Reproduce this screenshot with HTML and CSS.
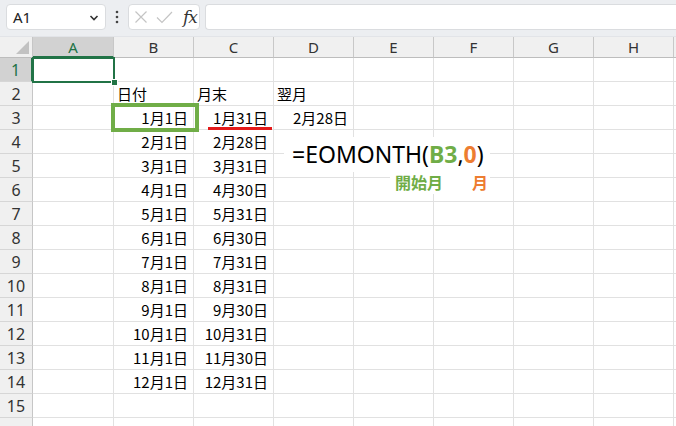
FILE: index.html
```html
<!DOCTYPE html>
<html lang="ja">
<head>
<meta charset="utf-8">
<link rel="stylesheet" href="styles.css">
</head>
<body>
<div class="toolbar">
  <div class="namebox">
    <span class="name">A1</span>
    <svg class="chev" width="10" height="8" viewBox="0 0 10 8"><path d="M1.5 2 L5 5.5 L8.5 2" fill="none" stroke="#333" stroke-width="1.6"/></svg>
  </div>
  <div class="dots">
    <svg width="4" height="14" viewBox="0 0 4 14"><circle cx="2" cy="2" r="1.3" fill="#444"/><circle cx="2" cy="7" r="1.3" fill="#444"/><circle cx="2" cy="12" r="1.3" fill="#444"/></svg>
  </div>
  <div class="fxbox">
    <svg class="ico" width="14" height="14" viewBox="0 0 14 14"><path d="M1.5 1.5 L12.5 12.5 M12.5 1.5 L1.5 12.5" stroke="#c4c4c4" stroke-width="1.2" fill="none"/></svg>
    <svg class="ico" width="17" height="14" viewBox="0 0 17 14"><path d="M1 7.5 L6 12.5 L16 2" stroke="#c4c4c4" stroke-width="1.2" fill="none"/></svg>
    <span class="fx">fx</span>
  </div>
  <div class="input"></div>
</div>

<div class="sheet">
  <div class="row head">
    <div class="rh corner"><span class="tri"></span></div>
    <div class="ch sel">A</div><div class="ch">B</div><div class="ch">C</div><div class="ch">D</div><div class="ch">E</div><div class="ch">F</div><div class="ch">G</div><div class="ch">H</div><div class="ch rest"></div>
  </div>
  <div class="row"><div class="rh sel">1</div><div class="c a"></div><div class="c"></div><div class="c"></div><div class="c"></div><div class="c"></div><div class="c"></div><div class="c"></div><div class="c"></div><div class="c rest"></div></div>
  <div class="row"><div class="rh">2</div><div class="c a"></div><div class="c l">日付</div><div class="c l">月末</div><div class="c l">翌月</div><div class="c"></div><div class="c"></div><div class="c"></div><div class="c"></div><div class="c rest"></div></div>
  <div class="row"><div class="rh">3</div><div class="c a"></div><div class="c">1月1日</div><div class="c">1月31日</div><div class="c">2月28日</div><div class="c"></div><div class="c"></div><div class="c"></div><div class="c"></div><div class="c rest"></div></div>
  <div class="row"><div class="rh">4</div><div class="c a"></div><div class="c">2月1日</div><div class="c">2月28日</div><div class="c"></div><div class="c"></div><div class="c"></div><div class="c"></div><div class="c"></div><div class="c rest"></div></div>
  <div class="row"><div class="rh">5</div><div class="c a"></div><div class="c">3月1日</div><div class="c">3月31日</div><div class="c"></div><div class="c"></div><div class="c"></div><div class="c"></div><div class="c"></div><div class="c rest"></div></div>
  <div class="row"><div class="rh">6</div><div class="c a"></div><div class="c">4月1日</div><div class="c">4月30日</div><div class="c"></div><div class="c"></div><div class="c"></div><div class="c"></div><div class="c"></div><div class="c rest"></div></div>
  <div class="row"><div class="rh">7</div><div class="c a"></div><div class="c">5月1日</div><div class="c">5月31日</div><div class="c"></div><div class="c"></div><div class="c"></div><div class="c"></div><div class="c"></div><div class="c rest"></div></div>
  <div class="row"><div class="rh">8</div><div class="c a"></div><div class="c">6月1日</div><div class="c">6月30日</div><div class="c"></div><div class="c"></div><div class="c"></div><div class="c"></div><div class="c"></div><div class="c rest"></div></div>
  <div class="row"><div class="rh">9</div><div class="c a"></div><div class="c">7月1日</div><div class="c">7月31日</div><div class="c"></div><div class="c"></div><div class="c"></div><div class="c"></div><div class="c"></div><div class="c rest"></div></div>
  <div class="row"><div class="rh">10</div><div class="c a"></div><div class="c">8月1日</div><div class="c">8月31日</div><div class="c"></div><div class="c"></div><div class="c"></div><div class="c"></div><div class="c"></div><div class="c rest"></div></div>
  <div class="row"><div class="rh">11</div><div class="c a"></div><div class="c">9月1日</div><div class="c">9月30日</div><div class="c"></div><div class="c"></div><div class="c"></div><div class="c"></div><div class="c"></div><div class="c rest"></div></div>
  <div class="row"><div class="rh">12</div><div class="c a"></div><div class="c">10月1日</div><div class="c">10月31日</div><div class="c"></div><div class="c"></div><div class="c"></div><div class="c"></div><div class="c"></div><div class="c rest"></div></div>
  <div class="row"><div class="rh">13</div><div class="c a"></div><div class="c">11月1日</div><div class="c">11月30日</div><div class="c"></div><div class="c"></div><div class="c"></div><div class="c"></div><div class="c"></div><div class="c rest"></div></div>
  <div class="row"><div class="rh">14</div><div class="c a"></div><div class="c">12月1日</div><div class="c">12月31日</div><div class="c"></div><div class="c"></div><div class="c"></div><div class="c"></div><div class="c"></div><div class="c rest"></div></div>
  <div class="row"><div class="rh">15</div><div class="c a"></div><div class="c"></div><div class="c"></div><div class="c"></div><div class="c"></div><div class="c"></div><div class="c"></div><div class="c"></div><div class="c rest"></div></div>
  <div class="row"><div class="rh"></div><div class="c a"></div><div class="c"></div><div class="c"></div><div class="c"></div><div class="c"></div><div class="c"></div><div class="c"></div><div class="c"></div><div class="c rest"></div></div>

  <div class="active"><span class="handle"></span></div>
  <div class="hilite"></div>
  <div class="underline"></div>
  <div class="formula">=EOMONTH(<b class="g">B3</b>,<b class="o">0</b>)</div>
  <div class="labels"><span class="g">開始月</span><span class="o">月</span></div>
</div>
</body>
</html>
```
FILE: styles.css
```css
* { box-sizing: border-box; }
html, body { margin: 0; padding: 0; }
body {
  width: 676px;
  height: 426px;
  overflow: hidden;
  background: #fff;
  font-family: "Noto Sans CJK JP", "Noto Sans", sans-serif;
  color: #000;
}
.toolbar {
  height: 37px;
  background: #eceef1;
  display: flex;
  align-items: flex-start;
  padding: 4px 0 0 6px;
  border-bottom: 1px solid #e2e4e8;
}
.namebox {
  width: 100px;
  height: 26px;
  background: #fff;
  border: 1px solid #dadcdf;
  border-radius: 4px;
  display: flex;
  align-items: center;
  justify-content: space-between;
  padding: 0 6px 0 6px;
}
.name { font-family: "Noto Sans", sans-serif; font-size: 15px; color: #222; }
.chev { margin-top: 1px; }
.dots {
  width: 22px;
  height: 26px;
  display: flex;
  align-items: center;
  justify-content: center;
}
.fxbox {
  width: 72px;
  height: 26px;
  background: #fff;
  border: 1px solid #dadcdf;
  border-radius: 4px;
  display: flex;
  align-items: center;
  padding-left: 5px;
  gap: 8px;
}
.fx {
  font-family: "DejaVu Serif", "Liberation Serif", serif;
  font-style: italic;
  font-size: 17px;
  color: #333;
  margin-left: 2px;
  letter-spacing: -1px;
  line-height: 1;
}
.input {
  flex: 1;
  height: 26px;
  margin-left: 5px;
  background: #fff;
  border: 1px solid #dadcdf;
  border-right: none;
  border-radius: 4px 0 0 4px;
}
.sheet { position: relative; }
.row { display: flex; height: 24px; }
.row.head { height: 21px; }
.rh {
  width: 33px;
  flex: none;
  background: #f0f0f0;
  border-right: 1px solid #c6c6c6;
  border-bottom: 1px solid #d6d6d6;
  font-family: "Noto Sans", sans-serif;
  font-size: 16px;
  color: #333;
  display: flex;
  align-items: center;
  justify-content: center;
  line-height: 1;
}
.rh.sel {
  background: #d2d2d2;
  color: #217346;
  border-right: 2px solid #217346;
}
.corner { position: relative; border-bottom: 1px solid #bdbdbd; }
.tri {
  position: absolute;
  right: 3px;
  bottom: 3px;
  width: 0; height: 0;
  border-left: 13px solid transparent;
  border-bottom: 13px solid #c2c2c2;
}
.ch {
  width: 80px;
  flex: none;
  background: #f0f0f0;
  border-right: 1px solid #c8c8c8;
  border-bottom: 1px solid #bdbdbd;
  font-family: "Noto Sans", sans-serif;
  font-size: 15px;
  color: #333;
  display: flex;
  align-items: center;
  justify-content: center;
}
.ch.sel {
  width: 81px;
  background: #d2d2d2;
  color: #217346;
  border-bottom: 2px solid #217346;
}
.c {
  width: 80px;
  flex: none;
  border-right: 1px solid #e1e1e1;
  border-bottom: 1px solid #e1e1e1;
  font-size: 15px;
  display: flex;
  align-items: center;
  justify-content: flex-end;
  padding: 0 5px 0 3px;
  white-space: nowrap;
}
.c.a { width: 81px; }
.c.l { justify-content: flex-start; }
.rest, .ch.rest { flex: 1; width: auto; border-right: none; }
.active {
  position: absolute;
  left: 32px; top: 20px;
  width: 83px; height: 26px;
  border: 2px solid #217346;
}
.handle {
  position: absolute;
  right: -5px; bottom: -5px;
  width: 7px; height: 7px;
  background: #217346;
  border: 1px solid #fff;
}
.hilite {
  position: absolute;
  left: 111px; top: 66px;
  width: 88px; height: 29px;
  border: 4px solid #70ad47;
}
.underline {
  position: absolute;
  left: 208px; top: 90px;
  width: 64px; height: 3px;
  background: #e31a1a;
}
.formula {
  position: absolute;
  left: 284px; top: 100px;
  width: 206px; height: 35px;
  background: #fff;
  padding-left: 8px;
  font-family: "Noto Sans", sans-serif;
  font-size: 23px;
  line-height: 35px;
  white-space: nowrap;
  color: #000;
}
.g { color: #70ad47; font-weight: bold; }
.o { color: #ed7d31; font-weight: bold; }
.labels {
  position: absolute;
  left: 390px; top: 133px;
  width: 100px; height: 24px;
  background: #fff;
  padding-left: 5px;
  font-size: 16px;
  line-height: 24px;
  display: flex;
  gap: 29px;
}
```
